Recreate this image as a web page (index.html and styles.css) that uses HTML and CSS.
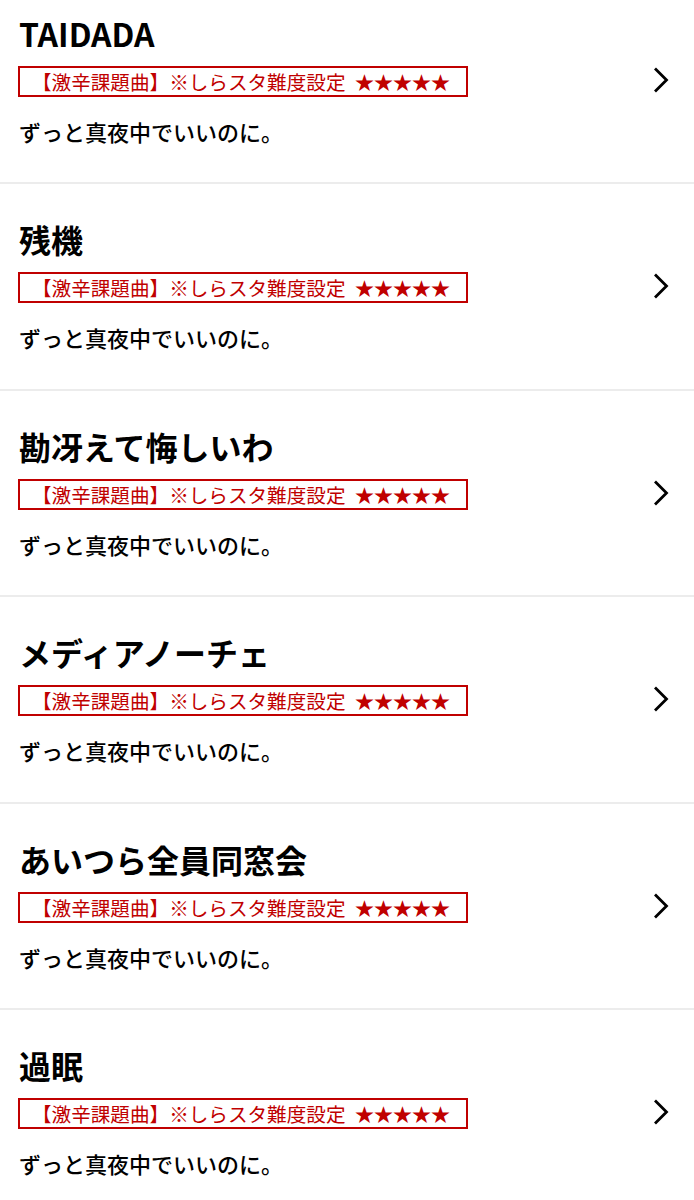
FILE: index.html
```html
<!DOCTYPE html>
<html lang="ja">
<head>
    <meta charset="UTF-8">
    <meta name="viewport" content="width=device-width, initial-scale=1.0">
    <title>課題曲一覧</title>
    <link rel="stylesheet" href="styles.css">
</head>
<body>
    <ul class="song-list">
        <li class="song">
            <div class="song-info">
                <h2 class="song-title">TAIDADA</h2>
                <p class="song-badge">【激辛課題曲】※しらスタ難度設定 <span class="stars">★★★★★</span></p>
                <p class="song-artist">ずっと真夜中でいいのに。</p>
            </div>
            <svg class="chevron" viewBox="0 0 16 26"><path d="M2 1.5 L13.5 13 L2 24.5"/></svg>
        </li>
        <li class="song">
            <div class="song-info">
                <h2 class="song-title">残機</h2>
                <p class="song-badge">【激辛課題曲】※しらスタ難度設定 <span class="stars">★★★★★</span></p>
                <p class="song-artist">ずっと真夜中でいいのに。</p>
            </div>
            <svg class="chevron" viewBox="0 0 16 26"><path d="M2 1.5 L13.5 13 L2 24.5"/></svg>
        </li>
        <li class="song">
            <div class="song-info">
                <h2 class="song-title">勘冴えて悔しいわ</h2>
                <p class="song-badge">【激辛課題曲】※しらスタ難度設定 <span class="stars">★★★★★</span></p>
                <p class="song-artist">ずっと真夜中でいいのに。</p>
            </div>
            <svg class="chevron" viewBox="0 0 16 26"><path d="M2 1.5 L13.5 13 L2 24.5"/></svg>
        </li>
        <li class="song">
            <div class="song-info">
                <h2 class="song-title">メディアノーチェ</h2>
                <p class="song-badge">【激辛課題曲】※しらスタ難度設定 <span class="stars">★★★★★</span></p>
                <p class="song-artist">ずっと真夜中でいいのに。</p>
            </div>
            <svg class="chevron" viewBox="0 0 16 26"><path d="M2 1.5 L13.5 13 L2 24.5"/></svg>
        </li>
        <li class="song">
            <div class="song-info">
                <h2 class="song-title">あいつら全員同窓会</h2>
                <p class="song-badge">【激辛課題曲】※しらスタ難度設定 <span class="stars">★★★★★</span></p>
                <p class="song-artist">ずっと真夜中でいいのに。</p>
            </div>
            <svg class="chevron" viewBox="0 0 16 26"><path d="M2 1.5 L13.5 13 L2 24.5"/></svg>
        </li>
        <li class="song">
            <div class="song-info">
                <h2 class="song-title">過眠</h2>
                <p class="song-badge">【激辛課題曲】※しらスタ難度設定 <span class="stars">★★★★★</span></p>
                <p class="song-artist">ずっと真夜中でいいのに。</p>
            </div>
            <svg class="chevron" viewBox="0 0 16 26"><path d="M2 1.5 L13.5 13 L2 24.5"/></svg>
        </li>
    </ul>
</body>
</html>
```

FILE: styles.css
```css
body {
    margin: 0;
    padding: 0;
    background-color: #fff;
    font-family: "Noto Sans CJK JP", "Noto Sans", sans-serif;
    color: #000;
    overflow: hidden;
}

.song-list {
    list-style: none;
    margin: -22.5px 0 0;
    padding: 0;
}

.song {
    display: flex;
    align-items: center;
    justify-content: space-between;
    height: 204.5px;
    padding: 0 25px 0 19px;
    border-bottom: 2px solid #ececec;
}

.song-info {
    display: flex;
    flex-direction: column;
    align-items: flex-start;
}

.song-title {
    margin: 0;
    font-size: 32px;
    font-weight: 700;
    line-height: 40px;
}

.song-badge {
    margin: 13px 0 0 -1px;
    padding: 0 16px 0 12px;
    border: 2px solid #c00000;
    color: #c00000;
    font-size: 19.6px;
    line-height: 27px;
    white-space: nowrap;
}

.stars {
    margin-left: 5px;
    font-size: 19px;
}

.song-artist {
    margin: 18px 0 0;
    font-size: 22px;
    font-weight: 500;
    line-height: 32px;
}

.chevron {
    width: 16px;
    height: 26px;
    fill: none;
    stroke: #000;
    stroke-width: 2.8;
}
```
